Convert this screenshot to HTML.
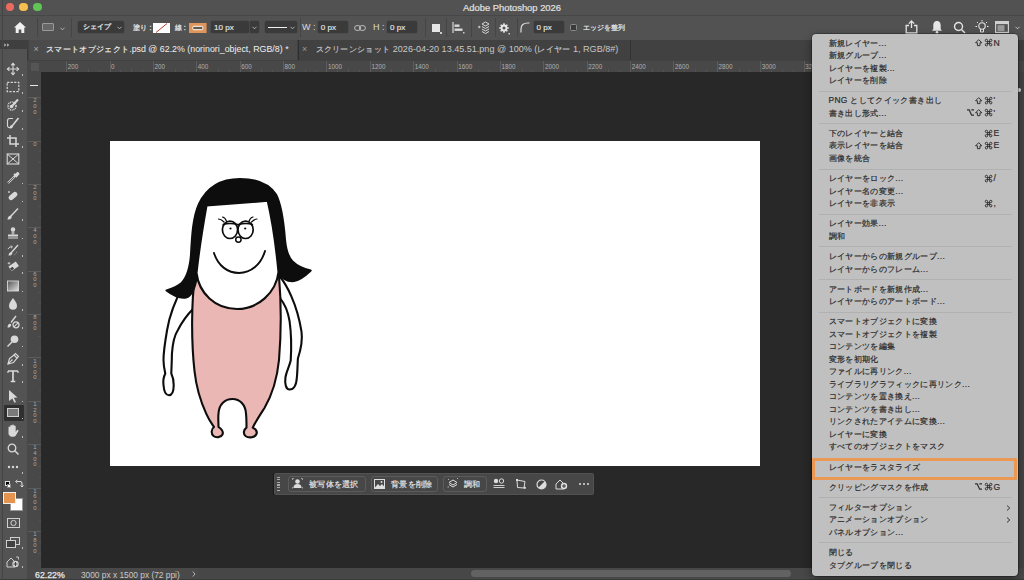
<!DOCTYPE html>
<html><head><meta charset="utf-8"><style>
*{margin:0;padding:0;box-sizing:border-box}
html,body{width:1024px;height:580px;overflow:hidden;background:#282828;font-family:"Liberation Sans",sans-serif;}
.a{position:absolute}
svg{position:absolute;overflow:visible}
#title{left:0;top:0;width:1024px;height:15px;background:#525252;}
#title .t{left:0;width:1024px;top:2px;text-align:center;color:#e0e0e0;font-size:9.4px;line-height:11px;-webkit-text-stroke:0.2px #e0e0e0}
.tl{width:8.6px;height:8.6px;border-radius:50%;top:2.7px}
#opt{left:0;top:14.5px;width:1024px;height:25.5px;background:#525252;border-top:1.2px solid #474747}
#tabs{left:27px;top:40px;width:997px;height:20px;background:#414141}
#tools{left:0;top:40px;width:27px;height:539px;background:#535353}
#toolhdr{left:0;top:40px;width:27px;height:9px;background:#3f3f3f}
#canvasbg{left:41px;top:72px;width:976px;height:496px;background:#282828}
#hruler{left:41px;top:60px;width:983px;height:12px;background:#484848;border-top:1px solid #414141}
#vruler{left:27px;top:72px;width:14px;height:496px;background:#484848}
#corner{left:27px;top:60px;width:14px;height:12px;background:#484848;border-top:1px solid #414141}
#doc{left:109.5px;top:140.5px;width:650.7px;height:325px;background:#fff}
#status{left:27px;top:568px;width:997px;height:12px;background:#494949}
.ot{color:#dcdcdc;font-size:9px;line-height:11px;white-space:nowrap;-webkit-text-stroke:0.3px #dcdcdc}
.fld{background:#3a3a3a;border-radius:1.5px;height:11.6px;top:21.4px;box-shadow:0 0 0 0.6px #484848}
.fld span{position:absolute;left:3px;top:0;color:#e6e6e6;font-size:8.1px;line-height:13.4px;-webkit-text-stroke:0.15px #e6e6e6}
.sep{width:1px;top:18px;height:19px;background:#454545}
.tab{top:40px;height:20px}
.jt{font-size:8.4px;letter-spacing:0.3px;-webkit-text-stroke:0.15px currentColor}
.rl{color:#b0b0b0;font-size:6.3px;line-height:7px;white-space:nowrap}
.vl{color:#a8a8a8;font-size:6px;line-height:5.6px;width:6px;text-align:center;white-space:normal;word-break:break-all}
#menu{left:811.5px;top:33.5px;width:206px;height:542px;background:#c0c0c0;border-radius:4px;box-shadow:0 0 0 0.5px rgba(0,0,0,.5),0 3px 10px rgba(0,0,0,.4)}
.mi{left:17px;color:#2c2c2c;font-size:8.4px;letter-spacing:0.35px;-webkit-text-stroke:0.2px #2c2c2c;line-height:12.5px;white-space:nowrap;height:12.5px}
.mod{color:#2a2a2a;font-size:8.6px;line-height:12.5px;text-align:right;white-space:nowrap;width:60px}
.key{color:#2e2e2e;font-size:8.6px;-webkit-text-stroke:0.2px #2e2e2e;line-height:12.5px;white-space:nowrap}
.msep{left:7px;width:193px;height:1px;background:#b1b1b1}
#ctx{left:274.3px;top:472.8px;width:319.7px;height:21.8px;background:#474747;border:1px solid #525252;border-radius:1.5px;box-shadow:-1px 0 1px rgba(0,0,0,.35)}
.cb{top:475.8px;height:15.8px;border:1px solid #5c5c5c;border-radius:3px;background:#474747}
.cb span{position:absolute;top:0;color:#e4e4e4;font-size:8.4px;letter-spacing:0.3px;line-height:14px;white-space:nowrap;-webkit-text-stroke:0.2px #e4e4e4}
</style></head><body>
<div id="title" class="a"><div class="a tl" style="left:5.5px;background:#ec6b5f"></div><div class="a tl" style="left:19.3px;background:#f4bf50"></div><div class="a tl" style="left:33.2px;background:#61c454"></div><div class="a t">Adobe Photoshop 2026</div></div>
<div id="opt" class="a"></div>
<svg class="a" style="left:13px;top:21px" width="14" height="13" viewBox="0 0 14 13"><path d="M7 1 L13 6.5 L11.3 6.5 L11.3 12 L8.3 12 L8.3 8.5 L5.7 8.5 L5.7 12 L2.7 12 L2.7 6.5 L1 6.5 Z" fill="#f0f0f0"/></svg>
<div class="a sep" style="left:37px"></div>
<div class="a" style="left:42px;top:22.7px;width:11.7px;height:8.8px;border:1px solid #9a9a9a;background:#666;border-radius:1px"></div>
<svg class="a" style="left:60px;top:26.5px" width="5" height="4" viewBox="0 0 5 4"><path d="M0.5 0.8 L2.5 2.8 L4.5 0.8" stroke="#bdbdbd" stroke-width="0.9" fill="none"/></svg>
<div class="a sep" style="left:71.3px"></div>
<div class="a fld" style="left:78px;top:20.8px;width:46px;height:12.7px;background:#3a3a3a;border-radius:2px;box-shadow:0 0 0 0.6px #484848"><span style="left:5px;line-height:12.7px;font-size:7.4px;-webkit-text-stroke:0.3px #e0e0e0">シェイプ</span></div>
<svg class="a" style="left:117px;top:26.3px" width="5" height="4" viewBox="0 0 5 4"><path d="M0.5 0.8 L2.5 2.8 L4.5 0.8" stroke="#bdbdbd" stroke-width="0.9" fill="none"/></svg>
<div class="a ot" style="left:132.8px;top:22px;font-size:7.4px;letter-spacing:0.2px">塗り :</div>
<svg class="a" style="left:153.3px;top:22.7px" width="17" height="10" viewBox="0 0 17 10"><rect x="0" y="0" width="17" height="10" fill="#fff"/><path d="M3 9.5 L14 0.5" stroke="#c0392b" stroke-width="1"/></svg>
<div class="a ot" style="left:174.8px;top:22px;font-size:7.4px">線 :</div>
<svg class="a" style="left:188.8px;top:22.7px" width="17.6" height="10" viewBox="0 0 17.6 10"><rect x="0" y="0" width="17.6" height="10" fill="#e0965a"/><rect x="3.8" y="3.3" width="10" height="3.4" rx="1" fill="#6a5a4a" stroke="#fff" stroke-width="1"/></svg>
<div class="a fld" style="left:211px;width:38.3px"><span>10 px</span></div>
<div class="a fld" style="left:250.3px;width:8.7px"></div>
<svg class="a" style="left:252.2px;top:26.2px" width="5" height="4" viewBox="0 0 5 4"><path d="M0.5 0.8 L2.5 2.8 L4.5 0.8" stroke="#bdbdbd" stroke-width="0.9" fill="none"/></svg>
<div class="a fld" style="left:265px;width:32.2px"></div>
<div class="a" style="left:268px;top:26.6px;width:19px;height:1.8px;background:#f0f0f0"></div>
<svg class="a" style="left:289.5px;top:26.2px" width="5" height="4" viewBox="0 0 5 4"><path d="M0.5 0.8 L2.5 2.8 L4.5 0.8" stroke="#bdbdbd" stroke-width="0.9" fill="none"/></svg>
<div class="a sep" style="left:300px"></div>
<div class="a ot" style="left:302px;top:22px;-webkit-text-stroke:0">W :</div>
<div class="a fld" style="left:317.7px;width:30.3px"><span style="left:3px">0 px</span></div>
<svg class="a" style="left:354px;top:24.5px" width="12" height="6" viewBox="0 0 12 6"><rect x="0.6" y="0.6" width="6" height="4.8" rx="2.4" fill="none" stroke="#bdbdbd" stroke-width="1"/><rect x="5.4" y="0.6" width="6" height="4.8" rx="2.4" fill="none" stroke="#bdbdbd" stroke-width="1"/></svg>
<div class="a ot" style="left:373px;top:22px;-webkit-text-stroke:0">H :</div>
<div class="a fld" style="left:387px;width:30px"><span style="left:3px">0 px</span></div>
<div class="a sep" style="left:424.5px"></div>
<div class="a" style="left:431.5px;top:23.5px;width:8px;height:8px;background:#e6e6e6"></div><div class="a" style="left:440px;top:32px;width:1.5px;height:1.5px;background:#ccc"></div>
<div class="a sep" style="left:446px"></div>
<svg class="a" style="left:452px;top:21.5px" width="13" height="12" viewBox="0 0 13 12"><path d="M1 0 V11" stroke="#d8d8d8" stroke-width="1.2"/><rect x="2.5" y="2.5" width="5" height="2.4" fill="#d8d8d8"/><rect x="2.5" y="6.5" width="8" height="2.4" fill="#d8d8d8"/><rect x="11" y="10" width="1.5" height="1.5" fill="#ccc"/></svg>
<div class="a sep" style="left:471px"></div>
<svg class="a" style="left:477px;top:21px" width="14" height="13" viewBox="0 0 14 13"><path d="M5 3 L8.5 1 L12 3 L8.5 5 Z M5 5.5 L8.5 7.5 L12 5.5 M5 8 L8.5 10 L12 8 M5 10.5 L8.5 12.5 L12 10.5" stroke="#d8d8d8" stroke-width="1" fill="none"/><path d="M1 6 H3.5 M2.2 4.8 V7.2" stroke="#d8d8d8" stroke-width="0.9"/></svg>
<div class="a sep" style="left:495px"></div>
<svg class="a" style="left:497.5px;top:21.5px" width="13" height="13" viewBox="0 0 13 13"><path d="M9.40 5.18 L10.75 5.28 L10.75 6.72 L9.40 6.82 L8.99 7.82 L9.87 8.84 L8.84 9.87 L7.82 8.99 L6.82 9.40 L6.72 10.75 L5.28 10.75 L5.18 9.40 L4.18 8.99 L3.16 9.87 L2.13 8.84 L3.01 7.82 L2.60 6.82 L1.25 6.72 L1.25 5.28 L2.60 5.18 L3.01 4.18 L2.13 3.16 L3.16 2.13 L4.18 3.01 L5.18 2.60 L5.28 1.25 L6.72 1.25 L6.82 2.60 L7.82 3.01 L8.84 2.13 L9.87 3.16 L8.99 4.18 Z" fill="#e6e6e6"/><circle cx="6" cy="6" r="1.5" fill="#525252"/><rect x="10.5" y="11" width="1.5" height="1.5" fill="#ccc"/></svg>
<div class="a sep" style="left:516.7px"></div>
<svg class="a" style="left:520px;top:22px" width="10" height="11" viewBox="0 0 10 11"><path d="M1 10.5 V7 Q1 1 8 1 H9.5" stroke="#dcdcdc" stroke-width="1.2" fill="none"/></svg>
<div class="a fld" style="left:533.5px;width:30.1px"><span style="left:3px">0 px</span></div>
<div class="a" style="left:569.5px;top:23.8px;width:7.5px;height:7.5px;border:1px solid #8a8a8a;border-radius:1.5px;background:#3a3a3a"></div>
<div class="a ot" style="left:582.5px;top:22px;font-size:7.4px">エッジを整列</div>
<svg class="a" style="left:905px;top:19.5px" width="13" height="14" viewBox="0 0 13 14"><path d="M6.5 1 V8 M3.8 3.6 L6.5 1 L9.2 3.6" stroke="#e6e6e6" stroke-width="1.3" fill="none"/><path d="M4 5.5 H1.2 V13 H11.8 V5.5 H9" stroke="#e6e6e6" stroke-width="1.3" fill="none"/></svg>
<svg class="a" style="left:931px;top:19.5px" width="12" height="14" viewBox="0 0 12 14"><path d="M6 1 C3 1 2.3 3.5 2.3 6 V9 L1 10.8 H11 L9.7 9 V6 C9.7 3.5 9 1 6 1 Z" fill="#e6e6e6"/><circle cx="6" cy="12.3" r="1.3" fill="#e6e6e6"/></svg>
<svg class="a" style="left:952.5px;top:20.5px" width="13" height="13" viewBox="0 0 13 13"><circle cx="5.5" cy="5.5" r="4" fill="none" stroke="#e6e6e6" stroke-width="1.4"/><path d="M8.5 8.5 L12 12" stroke="#e6e6e6" stroke-width="1.5"/></svg>
<svg class="a" style="left:974.5px;top:19px" width="14" height="15" viewBox="0 0 14 15"><circle cx="7" cy="7" r="3.2" fill="none" stroke="#e6e6e6" stroke-width="1.1"/><path d="M5.5 10 V13 H8.5 V10 M7 1 V2.5 M2 3 L3 4 M12 3 L11 4 M0.5 7.5 H2 M12 7.5 H13.5" stroke="#e6e6e6" stroke-width="1" fill="none"/></svg>
<svg class="a" style="left:995px;top:21px" width="14" height="12" viewBox="0 0 14 12"><rect x="0.6" y="0.6" width="12.8" height="10.8" fill="none" stroke="#cfcfcf" stroke-width="1.2"/><rect x="0.6" y="0.6" width="12.8" height="2.5" fill="#cfcfcf"/><rect x="2.5" y="4.2" width="7" height="6" fill="#9a9a9a"/></svg>
<svg class="a" style="left:1014.5px;top:26px" width="5" height="4" viewBox="0 0 5 4"><path d="M0.5 0.8 L2.5 2.8 L4.5 0.8" stroke="#cfcfcf" stroke-width="0.9" fill="none"/></svg>
<div id="tabs" class="a"></div>
<div class="a tab" style="left:28.5px;width:268.5px;background:#4b4b4b"></div>
<div class="a" style="left:33.5px;top:44px;color:#a9a9a9;font-size:9px;line-height:11px">×</div>
<div class="a" style="left:46.2px;top:44.2px;color:#f0f0f0;font-size:8.85px;line-height:11px;white-space:nowrap"><span class="jt">スマートオブジェクト</span>.psd @ 62.2% (norinori_object, RGB/8) *</div>
<div class="a" style="left:298px;top:40px;width:1px;height:20px;background:#2e2e2e"></div>
<div class="a" style="left:302px;top:44px;color:#9a9a9a;font-size:9px;line-height:11px">×</div>
<div class="a" style="left:315.6px;top:44.2px;color:#c8c8c8;font-size:9.05px;line-height:11px;white-space:nowrap"><span class="jt">スクリーンショット</span> 2026-04-20 13.45.51.png @ 100% (<span class="jt">レイヤー</span> 1, RGB/8#)</div>
<div class="a" style="left:630px;top:40px;width:1px;height:20px;background:#333"></div>
<div id="tools" class="a"></div>
<div id="toolhdr" class="a"></div>
<svg class="a" style="left:3.8px;top:42.8px" width="6" height="4" viewBox="0 0 6 4"><path d="M0.3 0.3 L2.3 2 L0.3 3.7 Z M3.2 0.3 L5.2 2 L3.2 3.7 Z" fill="#bdbdbd"/></svg>
<div class="a" style="left:26.5px;top:49px;width:1px;height:519px;background:#3a3a3a"></div>
<div class="a" style="left:3.5px;top:404.9px;width:20.6px;height:15.8px;background:#2f2f2f;border-radius:1px"></div>
<div class="a" style="left:7.3px;top:407.8px;width:12px;height:9.1px;background:#7a7a7a;border:1px solid #cfcfcf"></div><div class="a" style="left:21.5px;top:417.5px;width:1.6px;height:1.6px;background:#bbb"></div>
<svg class="a" style="left:5.0px;top:62.2px" width="16" height="14" viewBox="-8.0 -7.0 16 14"><path d="M0 -5.5 V5.5 M-5.5 0 H5.5" stroke="#d8d8d8" fill="none" stroke-width="1.1"/><path d="M-1.8 -3.6 L0 -5.6 L1.8 -3.6 M-1.8 3.6 L0 5.6 L1.8 3.6 M-3.6 -1.8 L-5.6 0 L-3.6 1.8 M3.6 -1.8 L5.6 0 L3.6 1.8" stroke="#d8d8d8" fill="none" stroke-width="1.1"/></svg><div class="a" style="left:21.5px;top:74.2px;width:1.6px;height:1.6px;background:#bbb"></div>
<svg class="a" style="left:5.0px;top:80.0px" width="16" height="14" viewBox="-8.0 -7.0 16 14"><rect x="-5.8" y="-4.6" width="11.6" height="9.2" stroke="#d8d8d8" fill="none" stroke-width="1.2" stroke-dasharray="2.2 1.3"/></svg><div class="a" style="left:21.5px;top:92px;width:1.6px;height:1.6px;background:#bbb"></div>
<svg class="a" style="left:5.0px;top:98.0px" width="16" height="14" viewBox="-8.0 -7.0 16 14"><circle cx="-1" cy="1" r="4" stroke="#d8d8d8" fill="none" stroke-width="1.6" stroke-dasharray="1 0.8"/><path d="M-1 1 L5 -5.5" stroke="#d8d8d8" stroke-width="2"/><circle cx="-1.5" cy="1.5" r="1.8" fill="#d8d8d8"/></svg><div class="a" style="left:21.5px;top:110px;width:1.6px;height:1.6px;background:#bbb"></div>
<svg class="a" style="left:5.0px;top:116.3px" width="16" height="14" viewBox="-8.0 -7.0 16 14"><path d="M0 -4.5 H-3.5 C-5 -4.5 -5.5 -3.5 -5.5 -2 V2.5 C-5.5 4 -4.5 4.8 -3 4.5" stroke="#d8d8d8" fill="none" stroke-width="1.1"/><path d="M-0.5 2.5 L5.5 -5" stroke="#d8d8d8" stroke-width="1.6"/><path d="M-3.5 5.5 C-3.2 2.5 -1.8 1.3 -0.3 2.3 C1 3.5 -1 6 -3.5 5.5 Z" fill="#d8d8d8"/></svg><div class="a" style="left:21.5px;top:128.3px;width:1.6px;height:1.6px;background:#bbb"></div>
<svg class="a" style="left:5.0px;top:134.0px" width="16" height="14" viewBox="-8.0 -7.0 16 14"><path d="M-3 -6 V3 H6 M-6 -3 H3 V6" stroke="#d8d8d8" fill="none" stroke-width="1.5"/></svg><div class="a" style="left:21.5px;top:146px;width:1.6px;height:1.6px;background:#bbb"></div>
<svg class="a" style="left:5.0px;top:152.3px" width="16" height="14" viewBox="-8.0 -7.0 16 14"><rect x="-5.8" y="-5" width="11.6" height="10" stroke="#d8d8d8" fill="none" stroke-width="1.1"/><path d="M-5.8 -5 L5.8 5 M5.8 -5 L-5.8 5" stroke="#d8d8d8" fill="none" stroke-width="1"/></svg>
<svg class="a" style="left:5.0px;top:170.5px" width="16" height="14" viewBox="-8.0 -7.0 16 14"><path d="M-5 5 L2 -2" stroke="#d8d8d8" stroke-width="2.2"/><path d="M-5.3 5.3 L1 -1" stroke="#404040" stroke-width="0.8"/><path d="M1 -4 L4 -1 M2.5 -3 L4.5 -5 A1.2 1.2 0 0 1 5.5 -4 L3.5 -2" stroke="#d8d8d8" stroke-width="1.8" fill="none"/></svg><div class="a" style="left:21.5px;top:182.5px;width:1.6px;height:1.6px;background:#bbb"></div>
<svg class="a" style="left:5.0px;top:188.9px" width="16" height="14" viewBox="-8.0 -7.0 16 14"><rect x="-5" y="-2.5" width="10" height="5" rx="2.5" transform="rotate(-40)" fill="#d8d8d8"/><path d="M-4 -5 V-3 M-5 -4 H-3" stroke="#d8d8d8" stroke-width="0.8"/></svg><div class="a" style="left:21.5px;top:200.9px;width:1.6px;height:1.6px;background:#bbb"></div>
<svg class="a" style="left:5.0px;top:207.2px" width="16" height="14" viewBox="-8.0 -7.0 16 14"><path d="M-3 3 L5 -5.5" stroke="#d8d8d8" stroke-width="1.4"/><path d="M-5.5 5.5 C-5 2 -3 1 -1.5 2.5 C-0.5 4 -3 6 -5.5 5.5 Z" fill="#d8d8d8"/></svg><div class="a" style="left:21.5px;top:219.2px;width:1.6px;height:1.6px;background:#bbb"></div>
<svg class="a" style="left:5.0px;top:225.6px" width="16" height="14" viewBox="-8.0 -7.0 16 14"><circle cx="0" cy="-3.5" r="2.2" fill="#d8d8d8"/><path d="M-0.8 -1.5 V1.5 M0.8 -1.5 V1.5" stroke="#d8d8d8" stroke-width="1"/><rect x="-5" y="1.5" width="10" height="2" fill="#d8d8d8"/><path d="M-5 5 H5" stroke="#d8d8d8" stroke-width="1"/></svg><div class="a" style="left:21.5px;top:237.6px;width:1.6px;height:1.6px;background:#bbb"></div>
<svg class="a" style="left:5.0px;top:243.0px" width="16" height="14" viewBox="-8.0 -7.0 16 14"><path d="M-2 3 L5 -5" stroke="#d8d8d8" stroke-width="1.4"/><path d="M-4.5 5.5 C-4 2.5 -2.5 1.5 -1 2.8 C0 4 -2 6 -4.5 5.5 Z" fill="#d8d8d8"/><path d="M-5 -1 C-4 -3 -2 -3.5 -1 -3" stroke="#d8d8d8" fill="none" stroke-width="1"/><path d="M-2 -4.5 L-0.5 -3 L-2 -1.8" stroke="#d8d8d8" fill="none" stroke-width="0.9"/><path d="M1 5 A5 5 0 0 0 4 1" stroke="#d8d8d8" fill="none" stroke-width="0.6" stroke-dasharray="0.8 0.8"/></svg><div class="a" style="left:21.5px;top:255px;width:1.6px;height:1.6px;background:#bbb"></div>
<svg class="a" style="left:5.0px;top:260.3px" width="16" height="14" viewBox="-8.0 -7.0 16 14"><rect x="-3.5" y="-3" width="9" height="5.5" transform="rotate(-35)" fill="#d8d8d8"/><rect x="-3.2" y="-0.5" width="3" height="2.6" transform="rotate(-35)" fill="#404040"/><path d="M-4 -5 V-2.5 M-5.3 -3.7 H-2.7" stroke="#d8d8d8" stroke-width="0.8"/></svg><div class="a" style="left:21.5px;top:272.3px;width:1.6px;height:1.6px;background:#bbb"></div>
<svg class="a" style="left:5.0px;top:278.6px" width="16" height="14" viewBox="-8.0 -7.0 16 14"><defs><linearGradient id="gg" x1="0" y1="0" x2="1" y2="1"><stop offset="0" stop-color="#555"/><stop offset="1" stop-color="#e0e0e0"/></linearGradient></defs><rect x="-5.5" y="-5" width="11" height="10" fill="url(#gg)" stroke="#d8d8d8" stroke-width="0.9"/></svg><div class="a" style="left:21.5px;top:290.6px;width:1.6px;height:1.6px;background:#bbb"></div>
<svg class="a" style="left:5.0px;top:297.0px" width="16" height="14" viewBox="-8.0 -7.0 16 14"><path d="M0 -6 C2 -3 4 -1 4 1.8 A4 4 0 0 1 -4 1.8 C-4 -1 -2 -3 0 -6 Z" fill="#d8d8d8"/></svg><div class="a" style="left:21.5px;top:309px;width:1.6px;height:1.6px;background:#bbb"></div>
<svg class="a" style="left:5.0px;top:315.3px" width="16" height="14" viewBox="-8.0 -7.0 16 14"><path d="M3 -6 L-2 0.5" stroke="#d8d8d8" stroke-width="1.4"/><path d="M-5.5 5.5 C-5.3 2.5 -3.8 1 -2.2 2 C-1 3.3 -3 6 -5.5 5.5 Z" fill="#d8d8d8"/><circle cx="3" cy="2.8" r="3" stroke="#d8d8d8" fill="none" stroke-width="1.3"/><path d="M1 4.8 L5 0.8" stroke="#d8d8d8" stroke-width="1.1"/></svg><div class="a" style="left:21.5px;top:327.3px;width:1.6px;height:1.6px;background:#bbb"></div>
<svg class="a" style="left:5.0px;top:333.6px" width="16" height="14" viewBox="-8.0 -7.0 16 14"><circle cx="1.5" cy="-1.8" r="3.8" fill="#d8d8d8"/><path d="M-1 1 L-5.5 5.5" stroke="#d8d8d8" stroke-width="1.5"/></svg><div class="a" style="left:21.5px;top:345.6px;width:1.6px;height:1.6px;background:#bbb"></div>
<svg class="a" style="left:5.0px;top:352.0px" width="16" height="14" viewBox="-8.0 -7.0 16 14"><path d="M-5 5 L-3.5 -0.5 L1 -4 L4 -1 L0.5 3.5 Z" stroke="#d8d8d8" fill="none" stroke-width="1.2"/><path d="M1 -4 L2.5 -5.5 L5.5 -2.5 L4 -1 M-5 5 L-1.2 1.2" stroke="#d8d8d8" fill="none" stroke-width="1.1"/><circle cx="-1" cy="1" r="0.8" fill="#d8d8d8"/></svg><div class="a" style="left:21.5px;top:364px;width:1.6px;height:1.6px;background:#bbb"></div>
<svg class="a" style="left:5.0px;top:369.4px" width="16" height="14" viewBox="-8.0 -7.0 16 14"><path d="M-5 -5 H5 M0 -5 V5.5 M-2.3 5.5 H2.3" stroke="#d8d8d8" fill="none" stroke-width="1.7"/><path d="M-5 -5 V-3 M5 -5 V-3" stroke="#d8d8d8" fill="none" stroke-width="1.2"/></svg><div class="a" style="left:21.5px;top:381.4px;width:1.6px;height:1.6px;background:#bbb"></div>
<svg class="a" style="left:5.0px;top:388.6px" width="16" height="14" viewBox="-8.0 -7.0 16 14"><path d="M-4 -6 L4.5 1.5 L0.8 1.7 L3 6 L1.5 6.7 L-0.7 2.5 L-4 5 Z" fill="#d8d8d8"/></svg><div class="a" style="left:21.5px;top:400.6px;width:1.6px;height:1.6px;background:#bbb"></div>
<svg class="a" style="left:5.0px;top:424.3px" width="16" height="14" viewBox="-8.0 -7.0 16 14"><path d="M-4.5 0 V-3.5 A0.9 0.9 0 0 1 -2.7 -3.5 V-0.5 V-5 A0.9 0.9 0 0 1 -0.9 -5 V-1 V-5.5 A0.9 0.9 0 0 1 0.9 -5.5 V-1 V-4.5 A0.9 0.9 0 0 1 2.7 -4.5 V1 L4 -1 A1 1 0 0 1 5.5 0 L2.5 5 C1.5 6.2 -3.5 6.5 -4.5 3 Z" fill="#d8d8d8"/></svg><div class="a" style="left:21.5px;top:436.3px;width:1.6px;height:1.6px;background:#bbb"></div>
<svg class="a" style="left:5.0px;top:441.7px" width="16" height="14" viewBox="-8.0 -7.0 16 14"><circle cx="-1" cy="-1" r="3.8" stroke="#d8d8d8" fill="none" stroke-width="1.3"/><path d="M1.8 1.8 L5.5 5.5" stroke="#d8d8d8" stroke-width="1.5"/></svg>
<svg class="a" style="left:5.0px;top:460.0px" width="16" height="14" viewBox="-8.0 -7.0 16 14"><circle cx="-4" cy="0" r="1.2" fill="#d8d8d8"/><circle cx="0" cy="0" r="1.2" fill="#d8d8d8"/><circle cx="4" cy="0" r="1.2" fill="#d8d8d8"/></svg><div class="a" style="left:21.5px;top:472px;width:1.6px;height:1.6px;background:#bbb"></div>
<div class="a" style="left:4.5px;top:481px;width:5px;height:5px;background:#000;border:0.5px solid #ddd"></div><div class="a" style="left:7px;top:483.5px;width:4px;height:4px;background:#fff;border:0.5px solid #888"></div>
<svg class="a" style="left:15px;top:478.5px" width="9" height="9" viewBox="0 0 9 9"><path d="M1.5 2.5 H5.5 A2 2 0 0 1 7 4.5 V7.5" stroke="#ddd" stroke-width="1.1" fill="none"/><path d="M0.5 2.5 L2.3 1 M0.5 2.5 L2.3 4 M5.5 6.5 L7 8 L8.5 6.5" stroke="#ddd" stroke-width="1" fill="none"/></svg>
<div class="a" style="left:9.8px;top:498.4px;width:13.2px;height:12.3px;background:#fff;border:0.5px solid #999"></div>
<div class="a" style="left:3.4px;top:491.8px;width:12.3px;height:11.9px;background:#e4944f;border:0.6px solid #f0f0f0"></div>
<svg class="a" style="left:6.5px;top:518.3px" width="13" height="10" viewBox="0 0 13 10"><rect x="0.5" y="0.5" width="12" height="9" fill="none" stroke="#cfcfcf" stroke-width="1"/><circle cx="6.5" cy="5" r="2.6" fill="none" stroke="#cfcfcf" stroke-width="1"/></svg>
<svg class="a" style="left:6px;top:536.5px" width="14" height="11" viewBox="0 0 14 11"><rect x="4.5" y="0.5" width="9" height="7" fill="none" stroke="#cfcfcf" stroke-width="1"/><rect x="0.5" y="3.5" width="9" height="7" fill="#404040" stroke="#cfcfcf" stroke-width="1"/></svg><div class="a" style="left:21.5px;top:547px;width:1.6px;height:1.6px;background:#bbb"></div>
<svg class="a" style="left:6px;top:555.5px" width="14" height="12" viewBox="0 0 14 12"><path d="M1 6 L5 2 L9 6 V11 H1 Z" fill="none" stroke="#cfcfcf" stroke-width="1"/><circle cx="9.5" cy="8" r="3.2" fill="#cfcfcf"/><path d="M9.5 6 V10 M7.5 8 H11.5" stroke="#404040" stroke-width="1"/><path d="M10 1 L12.5 1 L12.5 3.5" stroke="#cfcfcf" stroke-width="0.9" fill="none"/></svg><div class="a" style="left:21.5px;top:566px;width:1.6px;height:1.6px;background:#bbb"></div>
<div id="canvasbg" class="a"></div>
<div id="hruler" class="a"></div>
<div id="vruler" class="a"></div>
<div id="corner" class="a"></div>
<div class="a" style="left:30.5px;top:62.5px;width:8px;height:8px;background:#555"></div>
<div class="a" style="left:66.12px;top:61px;width:0.8px;height:11px;background:#5c5c5c"></div>
<div class="a rl" style="left:67.72px;top:63.2px">200</div>
<div class="a" style="left:87.81px;top:69px;width:0.6px;height:3px;background:#535353"></div>
<div class="a" style="left:76.97px;top:70px;width:0.6px;height:2px;background:#535353"></div>
<div class="a" style="left:98.66px;top:70px;width:0.6px;height:2px;background:#535353"></div>
<div class="a" style="left:109.50px;top:61px;width:0.8px;height:11px;background:#5c5c5c"></div>
<div class="a rl" style="left:111.10px;top:63.2px">0</div>
<div class="a" style="left:131.19px;top:69px;width:0.6px;height:3px;background:#535353"></div>
<div class="a" style="left:120.34px;top:70px;width:0.6px;height:2px;background:#535353"></div>
<div class="a" style="left:142.03px;top:70px;width:0.6px;height:2px;background:#535353"></div>
<div class="a" style="left:152.88px;top:61px;width:0.8px;height:11px;background:#5c5c5c"></div>
<div class="a rl" style="left:154.48px;top:63.2px">200</div>
<div class="a" style="left:174.57px;top:69px;width:0.6px;height:3px;background:#535353"></div>
<div class="a" style="left:163.72px;top:70px;width:0.6px;height:2px;background:#535353"></div>
<div class="a" style="left:185.41px;top:70px;width:0.6px;height:2px;background:#535353"></div>
<div class="a" style="left:196.26px;top:61px;width:0.8px;height:11px;background:#5c5c5c"></div>
<div class="a rl" style="left:197.86px;top:63.2px">400</div>
<div class="a" style="left:217.95px;top:69px;width:0.6px;height:3px;background:#535353"></div>
<div class="a" style="left:207.10px;top:70px;width:0.6px;height:2px;background:#535353"></div>
<div class="a" style="left:228.79px;top:70px;width:0.6px;height:2px;background:#535353"></div>
<div class="a" style="left:239.64px;top:61px;width:0.8px;height:11px;background:#5c5c5c"></div>
<div class="a rl" style="left:241.24px;top:63.2px">600</div>
<div class="a" style="left:261.33px;top:69px;width:0.6px;height:3px;background:#535353"></div>
<div class="a" style="left:250.49px;top:70px;width:0.6px;height:2px;background:#535353"></div>
<div class="a" style="left:272.18px;top:70px;width:0.6px;height:2px;background:#535353"></div>
<div class="a" style="left:283.02px;top:61px;width:0.8px;height:11px;background:#5c5c5c"></div>
<div class="a rl" style="left:284.62px;top:63.2px">800</div>
<div class="a" style="left:304.71px;top:69px;width:0.6px;height:3px;background:#535353"></div>
<div class="a" style="left:293.87px;top:70px;width:0.6px;height:2px;background:#535353"></div>
<div class="a" style="left:315.56px;top:70px;width:0.6px;height:2px;background:#535353"></div>
<div class="a" style="left:326.40px;top:61px;width:0.8px;height:11px;background:#5c5c5c"></div>
<div class="a rl" style="left:328.00px;top:63.2px">1000</div>
<div class="a" style="left:348.09px;top:69px;width:0.6px;height:3px;background:#535353"></div>
<div class="a" style="left:337.25px;top:70px;width:0.6px;height:2px;background:#535353"></div>
<div class="a" style="left:358.94px;top:70px;width:0.6px;height:2px;background:#535353"></div>
<div class="a" style="left:369.78px;top:61px;width:0.8px;height:11px;background:#5c5c5c"></div>
<div class="a rl" style="left:371.38px;top:63.2px">1200</div>
<div class="a" style="left:391.47px;top:69px;width:0.6px;height:3px;background:#535353"></div>
<div class="a" style="left:380.63px;top:70px;width:0.6px;height:2px;background:#535353"></div>
<div class="a" style="left:402.32px;top:70px;width:0.6px;height:2px;background:#535353"></div>
<div class="a" style="left:413.16px;top:61px;width:0.8px;height:11px;background:#5c5c5c"></div>
<div class="a rl" style="left:414.76px;top:63.2px">1400</div>
<div class="a" style="left:434.85px;top:69px;width:0.6px;height:3px;background:#535353"></div>
<div class="a" style="left:424.01px;top:70px;width:0.6px;height:2px;background:#535353"></div>
<div class="a" style="left:445.70px;top:70px;width:0.6px;height:2px;background:#535353"></div>
<div class="a" style="left:456.54px;top:61px;width:0.8px;height:11px;background:#5c5c5c"></div>
<div class="a rl" style="left:458.14px;top:63.2px">1600</div>
<div class="a" style="left:478.23px;top:69px;width:0.6px;height:3px;background:#535353"></div>
<div class="a" style="left:467.39px;top:70px;width:0.6px;height:2px;background:#535353"></div>
<div class="a" style="left:489.08px;top:70px;width:0.6px;height:2px;background:#535353"></div>
<div class="a" style="left:499.92px;top:61px;width:0.8px;height:11px;background:#5c5c5c"></div>
<div class="a rl" style="left:501.52px;top:63.2px">1800</div>
<div class="a" style="left:521.61px;top:69px;width:0.6px;height:3px;background:#535353"></div>
<div class="a" style="left:510.77px;top:70px;width:0.6px;height:2px;background:#535353"></div>
<div class="a" style="left:532.46px;top:70px;width:0.6px;height:2px;background:#535353"></div>
<div class="a" style="left:543.30px;top:61px;width:0.8px;height:11px;background:#5c5c5c"></div>
<div class="a rl" style="left:544.90px;top:63.2px">2000</div>
<div class="a" style="left:564.99px;top:69px;width:0.6px;height:3px;background:#535353"></div>
<div class="a" style="left:554.14px;top:70px;width:0.6px;height:2px;background:#535353"></div>
<div class="a" style="left:575.83px;top:70px;width:0.6px;height:2px;background:#535353"></div>
<div class="a" style="left:586.68px;top:61px;width:0.8px;height:11px;background:#5c5c5c"></div>
<div class="a rl" style="left:588.28px;top:63.2px">2200</div>
<div class="a" style="left:608.37px;top:69px;width:0.6px;height:3px;background:#535353"></div>
<div class="a" style="left:597.53px;top:70px;width:0.6px;height:2px;background:#535353"></div>
<div class="a" style="left:619.22px;top:70px;width:0.6px;height:2px;background:#535353"></div>
<div class="a" style="left:630.06px;top:61px;width:0.8px;height:11px;background:#5c5c5c"></div>
<div class="a rl" style="left:631.66px;top:63.2px">2400</div>
<div class="a" style="left:651.75px;top:69px;width:0.6px;height:3px;background:#535353"></div>
<div class="a" style="left:640.91px;top:70px;width:0.6px;height:2px;background:#535353"></div>
<div class="a" style="left:662.60px;top:70px;width:0.6px;height:2px;background:#535353"></div>
<div class="a" style="left:673.44px;top:61px;width:0.8px;height:11px;background:#5c5c5c"></div>
<div class="a rl" style="left:675.04px;top:63.2px">2600</div>
<div class="a" style="left:695.13px;top:69px;width:0.6px;height:3px;background:#535353"></div>
<div class="a" style="left:684.29px;top:70px;width:0.6px;height:2px;background:#535353"></div>
<div class="a" style="left:705.98px;top:70px;width:0.6px;height:2px;background:#535353"></div>
<div class="a" style="left:716.82px;top:61px;width:0.8px;height:11px;background:#5c5c5c"></div>
<div class="a rl" style="left:718.42px;top:63.2px">2800</div>
<div class="a" style="left:738.51px;top:69px;width:0.6px;height:3px;background:#535353"></div>
<div class="a" style="left:727.67px;top:70px;width:0.6px;height:2px;background:#535353"></div>
<div class="a" style="left:749.36px;top:70px;width:0.6px;height:2px;background:#535353"></div>
<div class="a" style="left:760.20px;top:61px;width:0.8px;height:11px;background:#5c5c5c"></div>
<div class="a rl" style="left:761.80px;top:63.2px">3000</div>
<div class="a" style="left:781.89px;top:69px;width:0.6px;height:3px;background:#535353"></div>
<div class="a" style="left:771.05px;top:70px;width:0.6px;height:2px;background:#535353"></div>
<div class="a" style="left:792.74px;top:70px;width:0.6px;height:2px;background:#535353"></div>
<div class="a" style="left:803.58px;top:61px;width:0.8px;height:11px;background:#5c5c5c"></div>
<div class="a rl" style="left:805.18px;top:63.2px">3200</div>
<div class="a" style="left:825.27px;top:69px;width:0.6px;height:3px;background:#535353"></div>
<div class="a" style="left:814.43px;top:70px;width:0.6px;height:2px;background:#535353"></div>
<div class="a" style="left:836.12px;top:70px;width:0.6px;height:2px;background:#535353"></div>
<div class="a" style="left:846.96px;top:61px;width:0.8px;height:11px;background:#5c5c5c"></div>
<div class="a rl" style="left:848.56px;top:63.2px">3400</div>
<div class="a" style="left:868.65px;top:69px;width:0.6px;height:3px;background:#535353"></div>
<div class="a" style="left:857.81px;top:70px;width:0.6px;height:2px;background:#535353"></div>
<div class="a" style="left:879.50px;top:70px;width:0.6px;height:2px;background:#535353"></div>
<div class="a" style="left:890.34px;top:61px;width:0.8px;height:11px;background:#5c5c5c"></div>
<div class="a rl" style="left:891.94px;top:63.2px">3600</div>
<div class="a" style="left:912.03px;top:69px;width:0.6px;height:3px;background:#535353"></div>
<div class="a" style="left:901.19px;top:70px;width:0.6px;height:2px;background:#535353"></div>
<div class="a" style="left:922.88px;top:70px;width:0.6px;height:2px;background:#535353"></div>
<div class="a" style="left:933.72px;top:61px;width:0.8px;height:11px;background:#5c5c5c"></div>
<div class="a rl" style="left:935.32px;top:63.2px">3800</div>
<div class="a" style="left:955.41px;top:69px;width:0.6px;height:3px;background:#535353"></div>
<div class="a" style="left:944.57px;top:70px;width:0.6px;height:2px;background:#535353"></div>
<div class="a" style="left:966.25px;top:70px;width:0.6px;height:2px;background:#535353"></div>
<div class="a" style="left:977.10px;top:61px;width:0.8px;height:11px;background:#5c5c5c"></div>
<div class="a rl" style="left:978.70px;top:63.2px">4000</div>
<div class="a" style="left:998.79px;top:69px;width:0.6px;height:3px;background:#535353"></div>
<div class="a" style="left:987.95px;top:70px;width:0.6px;height:2px;background:#535353"></div>
<div class="a" style="left:1009.63px;top:70px;width:0.6px;height:2px;background:#535353"></div>
<div class="a" style="left:28px;top:97.12px;width:13px;height:0.8px;background:#5c5c5c"></div>
<div class="a vl" style="left:32px;top:98.32px"><div>2</div><div>0</div><div>0</div></div>
<div class="a" style="left:38px;top:118.81px;width:3px;height:0.6px;background:#535353"></div>
<div class="a" style="left:39px;top:107.97px;width:2px;height:0.6px;background:#535353"></div>
<div class="a" style="left:39px;top:129.66px;width:2px;height:0.6px;background:#535353"></div>
<div class="a" style="left:28px;top:140.50px;width:13px;height:0.8px;background:#5c5c5c"></div>
<div class="a vl" style="left:32px;top:141.70px"><div>0</div></div>
<div class="a" style="left:38px;top:162.19px;width:3px;height:0.6px;background:#535353"></div>
<div class="a" style="left:39px;top:151.34px;width:2px;height:0.6px;background:#535353"></div>
<div class="a" style="left:39px;top:173.03px;width:2px;height:0.6px;background:#535353"></div>
<div class="a" style="left:28px;top:183.88px;width:13px;height:0.8px;background:#5c5c5c"></div>
<div class="a vl" style="left:32px;top:185.08px"><div>2</div><div>0</div><div>0</div></div>
<div class="a" style="left:38px;top:205.57px;width:3px;height:0.6px;background:#535353"></div>
<div class="a" style="left:39px;top:194.72px;width:2px;height:0.6px;background:#535353"></div>
<div class="a" style="left:39px;top:216.41px;width:2px;height:0.6px;background:#535353"></div>
<div class="a" style="left:28px;top:227.26px;width:13px;height:0.8px;background:#5c5c5c"></div>
<div class="a vl" style="left:32px;top:228.46px"><div>4</div><div>0</div><div>0</div></div>
<div class="a" style="left:38px;top:248.95px;width:3px;height:0.6px;background:#535353"></div>
<div class="a" style="left:39px;top:238.10px;width:2px;height:0.6px;background:#535353"></div>
<div class="a" style="left:39px;top:259.80px;width:2px;height:0.6px;background:#535353"></div>
<div class="a" style="left:28px;top:270.64px;width:13px;height:0.8px;background:#5c5c5c"></div>
<div class="a vl" style="left:32px;top:271.84px"><div>6</div><div>0</div><div>0</div></div>
<div class="a" style="left:38px;top:292.33px;width:3px;height:0.6px;background:#535353"></div>
<div class="a" style="left:39px;top:281.49px;width:2px;height:0.6px;background:#535353"></div>
<div class="a" style="left:39px;top:303.18px;width:2px;height:0.6px;background:#535353"></div>
<div class="a" style="left:28px;top:314.02px;width:13px;height:0.8px;background:#5c5c5c"></div>
<div class="a vl" style="left:32px;top:315.22px"><div>8</div><div>0</div><div>0</div></div>
<div class="a" style="left:38px;top:335.71px;width:3px;height:0.6px;background:#535353"></div>
<div class="a" style="left:39px;top:324.87px;width:2px;height:0.6px;background:#535353"></div>
<div class="a" style="left:39px;top:346.56px;width:2px;height:0.6px;background:#535353"></div>
<div class="a" style="left:28px;top:357.40px;width:13px;height:0.8px;background:#5c5c5c"></div>
<div class="a vl" style="left:32px;top:358.60px"><div>1</div><div>0</div><div>0</div><div>0</div></div>
<div class="a" style="left:38px;top:379.09px;width:3px;height:0.6px;background:#535353"></div>
<div class="a" style="left:39px;top:368.25px;width:2px;height:0.6px;background:#535353"></div>
<div class="a" style="left:39px;top:389.94px;width:2px;height:0.6px;background:#535353"></div>
<div class="a" style="left:28px;top:400.78px;width:13px;height:0.8px;background:#5c5c5c"></div>
<div class="a vl" style="left:32px;top:401.98px"><div>1</div><div>2</div><div>0</div><div>0</div></div>
<div class="a" style="left:38px;top:422.47px;width:3px;height:0.6px;background:#535353"></div>
<div class="a" style="left:39px;top:411.63px;width:2px;height:0.6px;background:#535353"></div>
<div class="a" style="left:39px;top:433.32px;width:2px;height:0.6px;background:#535353"></div>
<div class="a" style="left:28px;top:444.16px;width:13px;height:0.8px;background:#5c5c5c"></div>
<div class="a vl" style="left:32px;top:445.36px"><div>1</div><div>4</div><div>0</div><div>0</div></div>
<div class="a" style="left:38px;top:465.85px;width:3px;height:0.6px;background:#535353"></div>
<div class="a" style="left:39px;top:455.01px;width:2px;height:0.6px;background:#535353"></div>
<div class="a" style="left:39px;top:476.70px;width:2px;height:0.6px;background:#535353"></div>
<div class="a" style="left:28px;top:487.54px;width:13px;height:0.8px;background:#5c5c5c"></div>
<div class="a vl" style="left:32px;top:488.74px"><div>1</div><div>6</div><div>0</div><div>0</div></div>
<div class="a" style="left:38px;top:509.23px;width:3px;height:0.6px;background:#535353"></div>
<div class="a" style="left:39px;top:498.39px;width:2px;height:0.6px;background:#535353"></div>
<div class="a" style="left:39px;top:520.08px;width:2px;height:0.6px;background:#535353"></div>
<div class="a" style="left:28px;top:530.92px;width:13px;height:0.8px;background:#5c5c5c"></div>
<div class="a vl" style="left:32px;top:532.12px"><div>1</div><div>8</div><div>0</div><div>0</div></div>
<div class="a" style="left:38px;top:552.61px;width:3px;height:0.6px;background:#535353"></div>
<div class="a" style="left:39px;top:541.77px;width:2px;height:0.6px;background:#535353"></div>
<div class="a" style="left:39px;top:563.46px;width:2px;height:0.6px;background:#535353"></div>
<div class="a" style="left:30px;top:85px;width:8px;height:1px;background:#e8e8e8"></div>
<div id="doc" class="a"></div>
<svg class="a" style="left:0;top:0" width="1024" height="580" viewBox="0 0 1024 580">
<g stroke="#0d0d0d" stroke-width="2.1" stroke-linejoin="round" stroke-linecap="round">
<path d="M184 284 C177 297 170 312 167.1 330 C164.5 345 163.5 354 163.5 360 C163.5 366 164.5 370 165.3 373.5 C163.5 377 163 381 163.5 385 C164 392 166 395.2 168.9 395.2 C172 395.2 173.7 391 173.7 385 C173.7 380 172.5 376 171.3 373.5 C171.5 366 171.9 360 171.9 354 C172.5 345 174 336 177.9 330 C182 322 187 315 193 309 L195 285 Z" fill="#fff"/>
<path d="M279.5 276 C286 284 297 303 301.5 331.6 C303 342 300 352 297.9 358.5 C297.5 365 297.5 371 296.9 377 C296.5 384 294 389.5 289.6 389.5 C286 389.5 284.5 384 285.5 377 C286.5 371 289.5 366 290.7 360.6 C291.5 348 291.5 335 289.6 321.3 C288 312 285 304 280.3 298.6 L278 285 Z" fill="#fff"/>
<path d="M195 276 C191.5 300 191 340 194.5 371 C196 385 200 400 206.2 413.6 C209 420 212 424 214 427 C211 429 211 434 213.5 436 C216 438 221 437.5 222.5 434.5 C223.5 432 221.5 429 218.5 427 C218.5 422 218 418 218.5 413.6 C219 404 225 399 232.5 399 C240 399 245.5 405 246 413.6 C246.5 418 246.5 423 246.5 427.6 C243.5 429.5 243 434 245.5 436 C249 438.5 255 437.5 256.5 434 C257.5 431 255.5 429 252.7 427.6 C256 421 260 415 264.5 408 C272 395 277 380 279 360 C281.5 330 281 300 279 276 Z" fill="#eab7b4"/>
<path d="M240 179 C219 179 206 189 199 204 C193 217 192 236 191 255 C190 267 188 277 181 283.5 C176 287.5 171 289 166.5 290.5 C173 295.5 180 298.5 186 297.5 C191 296 195 289 197 276 L280 274 C283 279.5 288 281.5 294 281 C301 280 306 275 310.7 270.6 C304 269 297 266 292.5 261.5 C288 257 286 250 285 240 C283.5 221 281.5 205 276 194.5 C268 183 256 179 240 179 Z" fill="#0d0d0d"/>
<path d="M206.5 205.5 L267.7 200.8 C271 215 275 235 278.5 272 C276 293 258 309 237 309 C215 309 199 293 196.5 273 C199 250 203 225 206.5 205.5 Z" fill="#fff"/>
</g>
<g stroke="#0d0d0d" fill="none" stroke-linecap="round">
<ellipse cx="230" cy="229.8" rx="7.6" ry="8.7" stroke-width="1.7"/>
<ellipse cx="245.6" cy="229.8" rx="7.6" ry="8.7" stroke-width="1.7"/>
<path d="M223.2 224.6 C227 223.4 233 223.4 237.4 224.6 M238.3 224.6 C243 223.4 249 223.4 252.4 224.6" stroke-width="1.6"/>
<path d="M224 222 C222 220 220.5 219 218.5 219 M226.5 221.2 C225.8 219 224.5 217.5 222.5 217 M251.5 222 C253.5 220 255 219 257 219 M249 221.2 C249.7 219 251 217.5 253 217" stroke-width="1.2"/>
<circle cx="238.4" cy="239.6" r="2.7" stroke-width="1.5" fill="#fff"/>
<path d="M214 253 C218 266 228 273 239 273 C251 273 261 264.5 265 251" stroke-width="1.9"/>
</g>
<circle cx="230.5" cy="228.5" r="1.1" fill="#0d0d0d"/><circle cx="245.2" cy="228.5" r="1.1" fill="#0d0d0d"/>
</svg>
<div id="status" class="a"></div>
<div class="a" style="left:198px;top:568px;width:613px;height:10px;background:#474747"></div>
<div class="a" style="left:470.7px;top:570px;width:320.2px;height:7px;background:#626262;border-radius:3.5px"></div>
<div class="a" style="left:0;top:578.5px;width:1024px;height:1.5px;background:#3a3a3a"></div>
<div class="a" style="left:35px;top:569.5px;color:#e8e8e8;font-size:8.8px;line-height:10px;-webkit-text-stroke:0.25px #e8e8e8">62.22%</div>
<div class="a" style="left:80.9px;top:569.5px;color:#c8c8c8;font-size:8.35px;line-height:10px;white-space:nowrap">3000 px x 1500 px (72 ppi)</div>
<svg class="a" style="left:191.5px;top:571px" width="4" height="6" viewBox="0 0 4 6"><path d="M0.8 0.5 L3 3 L0.8 5.5" stroke="#bbb" stroke-width="0.9" fill="none"/></svg>
<div class="a" style="left:1017px;top:40px;width:7px;height:20px;background:#414141"></div>
<div class="a" style="left:1017px;top:72px;width:7px;height:496px;background:#444"></div>
<div class="a" style="left:1017px;top:88px;width:4px;height:4px;border-radius:50%;background:#ddd"></div>
<div id="ctx" class="a"></div>
<div class="a" style="left:276.5px;top:476.5px;width:3px;height:1.3px;background:#aaa"></div>
<div class="a" style="left:276.5px;top:479.1px;width:3px;height:1.3px;background:#aaa"></div>
<div class="a" style="left:276.5px;top:481.7px;width:3px;height:1.3px;background:#aaa"></div>
<div class="a" style="left:276.5px;top:484.3px;width:3px;height:1.3px;background:#aaa"></div>
<div class="a" style="left:276.5px;top:486.9px;width:3px;height:1.3px;background:#aaa"></div>
<div class="a" style="left:276.5px;top:489.5px;width:3px;height:1.3px;background:#aaa"></div>
<div class="a cb" style="left:288px;width:78px"><span style="left:20px">被写体を選択</span></div>
<svg class="a" style="left:292px;top:478px" width="11" height="11" viewBox="0 0 11 11"><circle cx="5.5" cy="3.5" r="2.3" fill="#ddd"/><path d="M1.5 10 C1.5 7 3 6 5.5 6 C8 6 9.5 7 9.5 10 Z" fill="#ddd"/><path d="M0.5 0.5 V2 M0.5 0.5 H2 M10.5 0.5 V2 M10.5 0.5 H9 M0.5 10.5 V9 M10.5 10.5 V9" stroke="#ddd" stroke-width="0.6" fill="none"/></svg>
<div class="a cb" style="left:370.5px;width:67.3px"><span style="left:19.5px">背景を削除</span></div>
<svg class="a" style="left:374px;top:478.5px" width="11" height="10" viewBox="0 0 11 10"><rect x="0.5" y="0.5" width="10" height="9" fill="none" stroke="#ddd" stroke-width="1"/><path d="M0.5 9 L4 5 L6 7 L8 5 L10.5 8 V9.5 H0.5 Z" fill="#ddd"/><circle cx="7.5" cy="3" r="1" fill="#ddd"/></svg>
<div class="a cb" style="left:442.8px;width:43.8px"><span style="left:20px">調和</span></div>
<svg class="a" style="left:447px;top:478px" width="12" height="12" viewBox="0 0 12 12"><path d="M6 2 L10 4.5 L6 7 L2 4.5 Z" fill="none" stroke="#ddd" stroke-width="1"/><path d="M2 6.5 L6 9 L10 6.5" fill="none" stroke="#ddd" stroke-width="1"/><path d="M1 1 L2 2 M10 1 L11 0 M0.5 9 H2" stroke="#ddd" stroke-width="0.7"/></svg>
<svg class="a" style="left:493px;top:478px" width="12" height="11" viewBox="0 0 12 11"><circle cx="3" cy="3" r="2.2" fill="#ddd"/><circle cx="8.5" cy="3" r="2.2" fill="none" stroke="#ddd" stroke-width="1"/><path d="M0.5 7.5 H11.5 M0.5 9.5 H11.5" stroke="#ddd" stroke-width="0.9"/></svg>
<svg class="a" style="left:514.5px;top:477.5px" width="12" height="12" viewBox="0 0 12 12"><path d="M2 2 L10 3.5 L9 10 L2.5 9.5 Z" fill="none" stroke="#ddd" stroke-width="1"/><rect x="1" y="1" width="2" height="2" fill="#ddd"/><rect x="8.8" y="8.8" width="2" height="2" fill="#ddd"/></svg>
<svg class="a" style="left:535.5px;top:478.5px" width="11" height="11" viewBox="0 0 11 11"><circle cx="5.5" cy="5.5" r="4.5" fill="none" stroke="#ddd" stroke-width="1.2"/><path d="M8.7 2.3 A4.5 4.5 0 0 1 2.3 8.7 Z" fill="#ddd"/></svg>
<svg class="a" style="left:555px;top:477.5px" width="13" height="12" viewBox="0 0 13 12"><path d="M1 6 L5 2 L9 6 V11 H1 Z" fill="none" stroke="#ddd" stroke-width="1"/><circle cx="9" cy="8" r="3.2" fill="#ddd"/><path d="M9 6 V10 M7 8 H11" stroke="#3a3a3a" stroke-width="1"/></svg>
<div class="a" style="left:578.5px;top:482.5px;width:2.2px;height:2.2px;border-radius:50%;background:#ddd"></div>
<div class="a" style="left:582.5px;top:482.5px;width:2.2px;height:2.2px;border-radius:50%;background:#ddd"></div>
<div class="a" style="left:586.5px;top:482.5px;width:2.2px;height:2.2px;border-radius:50%;background:#ddd"></div>
<div class="a" style="left:2.2px;top:0;width:0.8px;height:580px;background:#444"></div>
<div id="menu" class="a">
<div class="a mi" style="top:3.15px">新規レイヤー...</div>
<svg class="a" style="left:173.20px;top:5.80px" width="7.2" height="7.2" viewBox="-0.3 -0.3 8 8"><path d="M2.6 2.6 V1.3 A1.3 1.3 0 1 0 1.3 2.6 H6.1 A1.3 1.3 0 1 0 4.8 1.3 V6.1 A1.3 1.3 0 1 0 6.1 4.8 H1.3 A1.3 1.3 0 1 0 2.6 6.1 Z" fill="none" stroke="#2e2e2e" stroke-width="1.05"/></svg>
<svg class="a" style="left:163.10px;top:5.70px" width="7.6" height="7.4" viewBox="0 0 8 8"><path d="M3.9 0.7 L7.3 4.1 H5.3 V7.2 H2.5 V4.1 H0.5 Z" fill="none" stroke="#2e2e2e" stroke-width="1.05" stroke-linejoin="miter"/></svg>
<div class="a key" style="left:182.10px;top:3.15px">N</div>
<div class="a mi" style="top:15.65px">新規グループ...</div>
<div class="a mi" style="top:28.15px">レイヤーを複製...</div>
<div class="a mi" style="top:40.65px">レイヤーを削除</div>
<div class="a msep" style="top:57.19px"></div>
<div class="a mi" style="top:60.82px">PNG としてクイック書き出し</div>
<svg class="a" style="left:173.20px;top:63.47px" width="7.2" height="7.2" viewBox="-0.3 -0.3 8 8"><path d="M2.6 2.6 V1.3 A1.3 1.3 0 1 0 1.3 2.6 H6.1 A1.3 1.3 0 1 0 4.8 1.3 V6.1 A1.3 1.3 0 1 0 6.1 4.8 H1.3 A1.3 1.3 0 1 0 2.6 6.1 Z" fill="none" stroke="#2e2e2e" stroke-width="1.05"/></svg>
<svg class="a" style="left:163.10px;top:63.37px" width="7.6" height="7.4" viewBox="0 0 8 8"><path d="M3.9 0.7 L7.3 4.1 H5.3 V7.2 H2.5 V4.1 H0.5 Z" fill="none" stroke="#2e2e2e" stroke-width="1.05" stroke-linejoin="miter"/></svg>
<div class="a key" style="left:182.10px;top:60.82px">'</div>
<div class="a mi" style="top:73.32px">書き出し形式...</div>
<svg class="a" style="left:173.20px;top:75.97px" width="7.2" height="7.2" viewBox="-0.3 -0.3 8 8"><path d="M2.6 2.6 V1.3 A1.3 1.3 0 1 0 1.3 2.6 H6.1 A1.3 1.3 0 1 0 4.8 1.3 V6.1 A1.3 1.3 0 1 0 6.1 4.8 H1.3 A1.3 1.3 0 1 0 2.6 6.1 Z" fill="none" stroke="#2e2e2e" stroke-width="1.05"/></svg>
<svg class="a" style="left:163.10px;top:75.87px" width="7.6" height="7.4" viewBox="0 0 8 8"><path d="M3.9 0.7 L7.3 4.1 H5.3 V7.2 H2.5 V4.1 H0.5 Z" fill="none" stroke="#2e2e2e" stroke-width="1.05" stroke-linejoin="miter"/></svg>
<svg class="a" style="left:155.00px;top:75.97px" width="7" height="7" viewBox="0 0 7 7"><path d="M0 0.9 H2.2 L4.6 6.1 H7 M4.3 0.9 H7" fill="none" stroke="#2e2e2e" stroke-width="1.1"/></svg>
<div class="a key" style="left:182.10px;top:73.32px">'</div>
<div class="a msep" style="top:89.85px"></div>
<div class="a mi" style="top:93.49px">下のレイヤーと結合</div>
<svg class="a" style="left:173.20px;top:96.14px" width="7.2" height="7.2" viewBox="-0.3 -0.3 8 8"><path d="M2.6 2.6 V1.3 A1.3 1.3 0 1 0 1.3 2.6 H6.1 A1.3 1.3 0 1 0 4.8 1.3 V6.1 A1.3 1.3 0 1 0 6.1 4.8 H1.3 A1.3 1.3 0 1 0 2.6 6.1 Z" fill="none" stroke="#2e2e2e" stroke-width="1.05"/></svg>
<div class="a key" style="left:182.10px;top:93.49px">E</div>
<div class="a mi" style="top:105.99px">表示レイヤーを結合</div>
<svg class="a" style="left:173.20px;top:108.64px" width="7.2" height="7.2" viewBox="-0.3 -0.3 8 8"><path d="M2.6 2.6 V1.3 A1.3 1.3 0 1 0 1.3 2.6 H6.1 A1.3 1.3 0 1 0 4.8 1.3 V6.1 A1.3 1.3 0 1 0 6.1 4.8 H1.3 A1.3 1.3 0 1 0 2.6 6.1 Z" fill="none" stroke="#2e2e2e" stroke-width="1.05"/></svg>
<svg class="a" style="left:163.10px;top:108.54px" width="7.6" height="7.4" viewBox="0 0 8 8"><path d="M3.9 0.7 L7.3 4.1 H5.3 V7.2 H2.5 V4.1 H0.5 Z" fill="none" stroke="#2e2e2e" stroke-width="1.05" stroke-linejoin="miter"/></svg>
<div class="a key" style="left:182.10px;top:105.99px">E</div>
<div class="a mi" style="top:118.49px">画像を統合</div>
<div class="a msep" style="top:135.03px"></div>
<div class="a mi" style="top:138.66px">レイヤーをロック...</div>
<svg class="a" style="left:173.20px;top:141.31px" width="7.2" height="7.2" viewBox="-0.3 -0.3 8 8"><path d="M2.6 2.6 V1.3 A1.3 1.3 0 1 0 1.3 2.6 H6.1 A1.3 1.3 0 1 0 4.8 1.3 V6.1 A1.3 1.3 0 1 0 6.1 4.8 H1.3 A1.3 1.3 0 1 0 2.6 6.1 Z" fill="none" stroke="#2e2e2e" stroke-width="1.05"/></svg>
<div class="a key" style="left:182.10px;top:138.66px">/</div>
<div class="a mi" style="top:151.16px">レイヤー名の変更...</div>
<div class="a mi" style="top:163.66px">レイヤーを非表示</div>
<svg class="a" style="left:173.20px;top:166.31px" width="7.2" height="7.2" viewBox="-0.3 -0.3 8 8"><path d="M2.6 2.6 V1.3 A1.3 1.3 0 1 0 1.3 2.6 H6.1 A1.3 1.3 0 1 0 4.8 1.3 V6.1 A1.3 1.3 0 1 0 6.1 4.8 H1.3 A1.3 1.3 0 1 0 2.6 6.1 Z" fill="none" stroke="#2e2e2e" stroke-width="1.05"/></svg>
<div class="a key" style="left:182.10px;top:163.66px">,</div>
<div class="a msep" style="top:180.19px"></div>
<div class="a mi" style="top:183.83px">レイヤー効果...</div>
<div class="a mi" style="top:196.33px">調和</div>
<div class="a msep" style="top:212.86px"></div>
<div class="a mi" style="top:216.50px">レイヤーからの新規グループ...</div>
<div class="a mi" style="top:229.00px">レイヤーからのフレーム...</div>
<div class="a msep" style="top:245.53px"></div>
<div class="a mi" style="top:249.17px">アートボードを新規作成...</div>
<div class="a mi" style="top:261.67px">レイヤーからのアートボード...</div>
<div class="a msep" style="top:278.20px"></div>
<div class="a mi" style="top:281.84px">スマートオブジェクトに変換</div>
<div class="a mi" style="top:294.34px">スマートオブジェクトを複製</div>
<div class="a mi" style="top:306.84px">コンテンツを編集</div>
<div class="a mi" style="top:319.34px">変形を初期化</div>
<div class="a mi" style="top:331.84px">ファイルに再リンク...</div>
<div class="a mi" style="top:344.34px">ライブラリグラフィックに再リンク...</div>
<div class="a mi" style="top:356.84px">コンテンツを置き換え...</div>
<div class="a mi" style="top:369.34px">コンテンツを書き出し...</div>
<div class="a mi" style="top:381.84px">リンクされたアイテムに変換...</div>
<div class="a mi" style="top:394.34px">レイヤーに変換</div>
<div class="a mi" style="top:406.84px">すべてのオブジェクトをマスク</div>
<div class="a mi" style="top:427.01px">レイヤーをラスタライズ</div>
<div class="a mi" style="top:447.18px">クリッピングマスクを作成</div>
<svg class="a" style="left:173.20px;top:449.83px" width="7.2" height="7.2" viewBox="-0.3 -0.3 8 8"><path d="M2.6 2.6 V1.3 A1.3 1.3 0 1 0 1.3 2.6 H6.1 A1.3 1.3 0 1 0 4.8 1.3 V6.1 A1.3 1.3 0 1 0 6.1 4.8 H1.3 A1.3 1.3 0 1 0 2.6 6.1 Z" fill="none" stroke="#2e2e2e" stroke-width="1.05"/></svg>
<svg class="a" style="left:163.70px;top:449.83px" width="7" height="7" viewBox="0 0 7 7"><path d="M0 0.9 H2.2 L4.6 6.1 H7 M4.3 0.9 H7" fill="none" stroke="#2e2e2e" stroke-width="1.1"/></svg>
<div class="a key" style="left:182.10px;top:447.18px">G</div>
<div class="a msep" style="top:463.71px"></div>
<div class="a mi" style="top:467.35px">フィルターオプション</div>
<svg class="a" style="left:194.0px;top:471.15px" width="5" height="6" viewBox="0 0 5 6"><path d="M1 0.6 L3.8 3 L1 5.4" stroke="#333" stroke-width="1" fill="none"/></svg>
<div class="a mi" style="top:479.85px">アニメーションオプション</div>
<svg class="a" style="left:194.0px;top:483.65px" width="5" height="6" viewBox="0 0 5 6"><path d="M1 0.6 L3.8 3 L1 5.4" stroke="#333" stroke-width="1" fill="none"/></svg>
<div class="a mi" style="top:492.35px">パネルオプション...</div>
<div class="a msep" style="top:508.88px"></div>
<div class="a mi" style="top:512.52px">閉じる</div>
<div class="a mi" style="top:525.02px">タブグループを閉じる</div>
</div>
<div class="a" style="left:812px;top:457.5px;width:204.5px;height:22px;border:3.4px solid #ea9852;border-radius:1px"></div>
</body></html>
